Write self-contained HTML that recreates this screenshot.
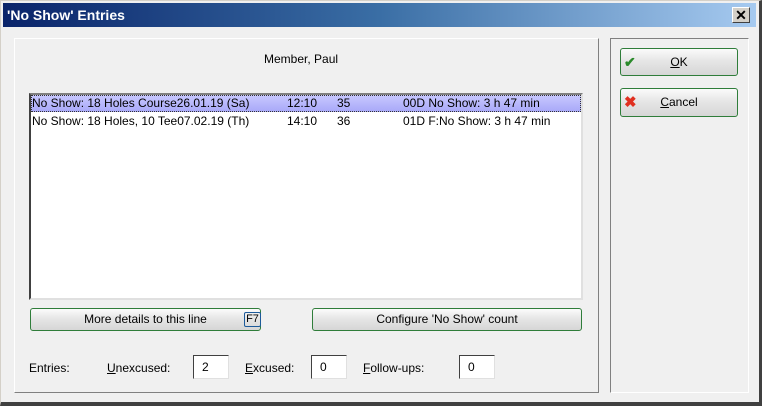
<!DOCTYPE html>
<html><head><style>
*{margin:0;padding:0;box-sizing:border-box}
body{width:762px;height:406px;background:#d4d0c8;font-family:"Liberation Sans",sans-serif;font-size:12px;color:#000;position:relative;overflow:hidden}
.win{position:absolute;left:0;top:0;width:762px;height:406px;background:#f0f0f0;border-right:3px solid #404040;border-bottom:4px solid #404040;border-left:1px solid #d4d0c8;border-top:1px solid #d4d0c8}
.title{position:absolute;left:3px;top:3px;width:753px;height:24px;background:linear-gradient(90deg,#0a246a,#3a6ea5 50%,#a6caf0);color:#fff;font-weight:bold;font-size:14px;line-height:24px;padding-left:4px}
.x{position:absolute;right:6px;top:4px;width:18px;height:16px;background:#d4d0c8;border:1px solid;border-color:#fff #404040 #404040 #fff;color:#000;font-size:14px;line-height:14px;text-align:center;font-weight:bold}
.lp{position:absolute;left:14px;top:38px;width:585px;height:355px;border:1px solid;border-color:#fff #808080 #808080 #fff}
.rp{position:absolute;left:610px;top:38px;width:139px;height:355px;border:1px solid;border-color:#808080 #fff #fff #808080}
.abs{position:absolute;white-space:nowrap}
.list{position:absolute;left:29px;top:93px;width:554px;height:207px;background:#fff;border:2px solid;border-color:#808080 #e0e0e0 #e0e0e0 #404040}
.row{position:absolute;left:0;height:17px;width:550px;line-height:17px}
.sel{background:linear-gradient(#c8c8ff,#a8a8f8);outline:1px dotted #333;outline-offset:-1px}
.btn{position:absolute;border:1px solid #2f7d3a;border-radius:3px;background:linear-gradient(#fbfbfb,#e6e6e6 45%,#d6d6d6);text-align:center}
.in{position:absolute;width:36px;height:24px;background:#fff;border:1px solid;border-color:#404040 #e0e0e0 #e0e0e0 #404040;padding-left:8px;line-height:22px}
u{text-decoration:underline}
</style></head><body>
<div class="win"></div>
<div class="title">'No Show' Entries<div class="x">✕</div></div>
<div class="lp"></div>
<div class="rp"></div>
<div class="abs" style="left:264px;top:52px">Member, Paul</div>
<div class="list">
<div class="row sel" style="top:0"><span class="abs" style="left:1px">No Show: 18 Holes Course26.01.19 (Sa)</span><span class="abs" style="left:256px">12:10</span><span class="abs" style="left:306px">35</span><span class="abs" style="left:372px">00D No Show: 3 h 47 min</span></div>
<div class="row" style="top:18px"><span class="abs" style="left:1px">No Show: 18 Holes, 10 Tee07.02.19 (Th)</span><span class="abs" style="left:256px">14:10</span><span class="abs" style="left:306px">36</span><span class="abs" style="left:372px">01D F:No Show: 3 h 47 min</span></div>
</div>
<div class="btn" style="left:30px;top:308px;width:231px;height:23px;line-height:21px">More details to this line<span class="abs" style="left:213px;top:3px;width:17px;height:15px;border:1px solid #1d5a9a;border-radius:2px;font-size:11px;line-height:13px">F7</span></div>
<div class="btn" style="left:312px;top:308px;width:270px;height:23px;line-height:21px">Configure 'No Show' count</div>
<div class="btn" style="left:620px;top:48px;width:118px;height:28px;line-height:26px"><span class="abs" style="left:3px;top:0;color:#2a8a2a;font-weight:bold;font-size:14px">✔</span><u>O</u>K</div>
<div class="btn" style="left:620px;top:88px;width:118px;height:29px;line-height:27px"><span class="abs" style="left:3px;top:0;color:#e03020;font-weight:bold;font-size:15px">✖</span><u>C</u>ancel</div>
<div class="abs" style="left:29px;top:361px">Entries:</div>
<div class="abs" style="left:107px;top:361px"><u>U</u>nexcused:</div>
<div class="in" style="left:193px;top:355px">2</div>
<div class="abs" style="left:245px;top:361px"><u>E</u>xcused:</div>
<div class="in" style="left:311px;top:355px">0</div>
<div class="abs" style="left:363px;top:361px"><u>F</u>ollow-ups:</div>
<div class="in" style="left:459px;top:355px">0</div>
</body></html>
